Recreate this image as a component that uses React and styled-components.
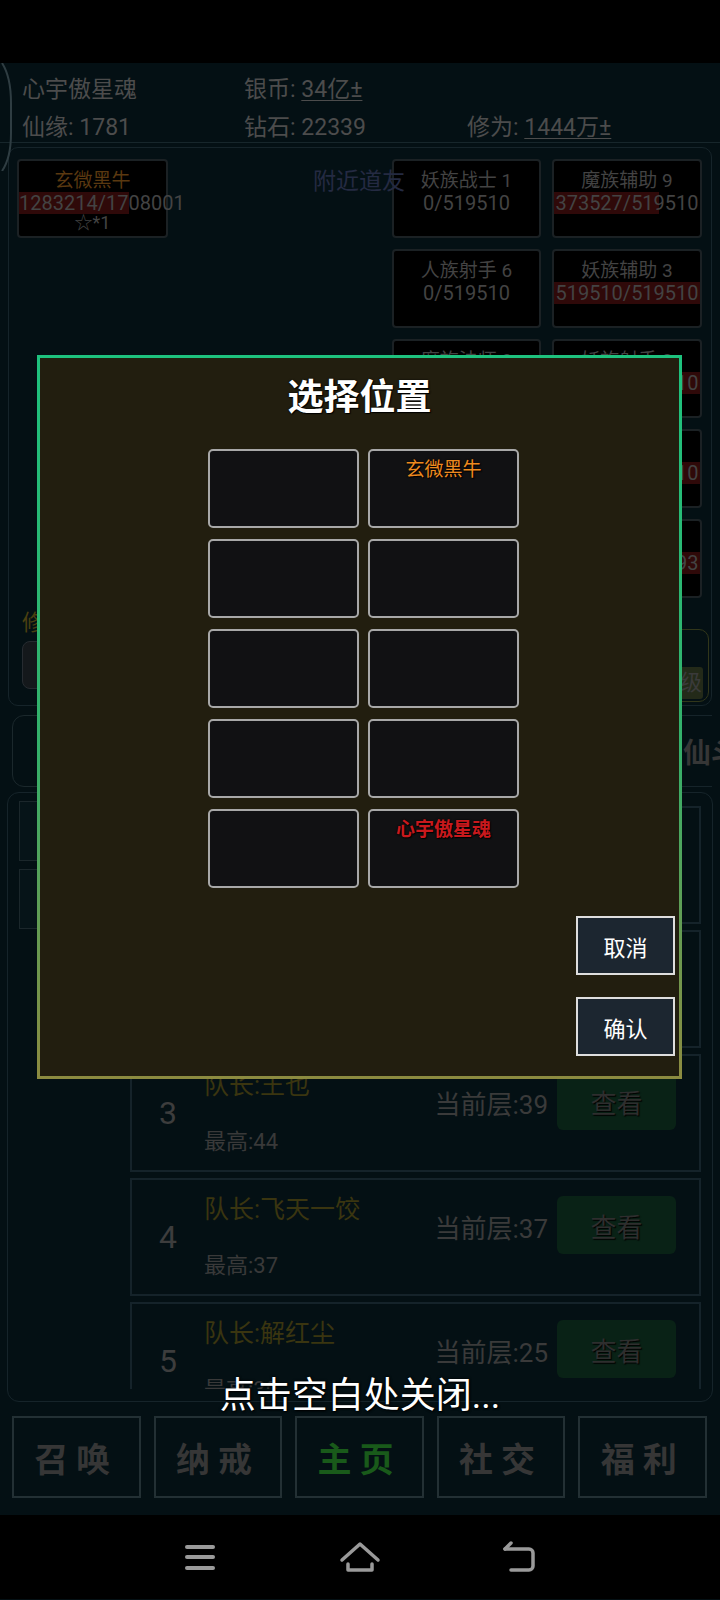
import React from 'react'
import styled, { createGlobalStyle } from 'styled-components'

const GlobalStyle = createGlobalStyle`
  html, body {
    margin: 0;
    padding: 0;
    background: #000;
  }
  body {
    font-family: "Roboto", "Noto Sans CJK SC", "Noto Sans", sans-serif;
  }
`

const Screen = styled.div`
  position: relative;
  width: 720px;
  height: 1600px;
  overflow: hidden;
  background: #041014;
  display: flex;
  flex-direction: column;
  color: #4d4d4d;
`

const StatusBar = styled.div`
  height: 63px;
  background: #000;
  flex-shrink: 0;
`

const Header = styled.div`
  position: relative;
  height: 80px;
  padding: 5px 0 0 22px;
  box-sizing: border-box;
  border-bottom: 1px solid #17262b;
  display: grid;
  grid-template-columns: 222px 223px 1fr;
  grid-template-rows: 38px 38px;
  align-items: center;
  font-size: 23px;
  color: #4c4c4c;
  flex-shrink: 0;
`

const Bracket = styled.svg`
  position: absolute;
  left: 0;
  top: 0;
`

const Stat = styled.div`
  white-space: nowrap;
`

const Under = styled.span`
  text-decoration: underline;
  text-underline-offset: 3px;
  text-decoration-thickness: 1px;
`

const Panel = styled.div`
  margin: 4px 8px 0;
  height: 559px;
  box-sizing: border-box;
  border: 1px solid #16242a;
  border-radius: 10px;
  padding: 11px 9px 3px 8px;
  display: flex;
  flex-direction: column;
  flex-shrink: 0;
`

const CardGrid = styled.div`
  display: grid;
  grid-template-columns: 151px minmax(0, 1fr) 149px 150px;
  grid-template-rows: repeat(5, 79px);
  column-gap: 11px;
  row-gap: 11px;
`

const Card = styled.div`
  background: #000;
  border: 2px solid #1b2124;
  border-radius: 4px;
  box-sizing: border-box;
  padding-top: 9px;
  display: flex;
  flex-direction: column;
  align-items: center;
  overflow: visible;
  grid-column: ${({ $col }) => $col};
  grid-row: ${({ $row }) => $row};
`

const CardTitle = styled.div`
  font-size: 19px;
  line-height: 22px;
  color: ${({ $tone }) => $tone || '#434343'};
  white-space: nowrap;
`

const CardValue = styled.div`
  align-self: stretch;
  text-align: center;
  font-size: 20px;
  line-height: 22px;
  color: #434343;
  white-space: nowrap;
  margin: 0 -6px;
  padding: 0 6px;
  background: ${({ $pct }) =>
    `linear-gradient(to right, transparent 6px, #2f0909 6px, #2f0909 calc(6px + ${$pct}% - ${$pct * 0.12}px), transparent calc(6px + ${$pct}% - ${$pct * 0.12}px))`};
`

const CardStar = styled.div`
  font-size: 18px;
  line-height: 18px;
  color: #434343;
`

const Nearby = styled.div`
  grid-column: 2;
  grid-row: 1;
  position: relative;
  z-index: 1;
  padding: 10px 0 0 134px;
  font-size: 23px;
  line-height: 26px;
  color: #242a42;
  white-space: nowrap;
`

const BottomSection = styled.div`
  margin-top: 12px;
  display: flex;
  justify-content: space-between;
  align-items: flex-start;
`

const LeftBlock = styled.div`
  margin-left: 5px;
  display: flex;
  flex-direction: column;
  gap: 5px;
`

const Label = styled.div`
  font-size: 22px;
  line-height: 26px;
  color: #4a3f10;
`

const InputBox = styled.div`
  width: 190px;
  height: 48px;
  border-radius: 8px;
  background: #14181b;
  border: 1px solid #262b30;
  box-sizing: border-box;
`

const UpgradeBox = styled.div`
  margin-top: 19px;
  margin-right: -7px;
  width: 150px;
  height: 73px;
  border: 1px solid #31361a;
  border-radius: 10px;
  box-sizing: border-box;
  display: flex;
  align-items: flex-end;
  justify-content: flex-end;
  padding: 0 5px 2px 0;
`

const UpgradeButton = styled.div`
  width: 110px;
  height: 32px;
  background: #232a19;
  border-radius: 3px;
  text-align: right;
  font-size: 22px;
  line-height: 32px;
  color: #3a3a3a;
  padding-right: 1px;
  box-sizing: border-box;
`

const TabRow = styled.div`
  margin: 9px 8px 0 12px;
  height: 72px;
  display: flex;
  flex-shrink: 0;
`

const TabBox = styled.div`
  width: 140px;
  border: 1px solid #1b282c;
  border-radius: 12px;
  box-sizing: border-box;
`

const TabRest = styled.div`
  flex: 1;
  border-top: 1px solid #16242a;
  border-bottom: 1px solid #16242a;
  display: flex;
  justify-content: flex-end;
  align-items: center;
`

const TabLabel = styled.div`
  margin-right: -27px;
  font-size: 28px;
  font-weight: bold;
  color: #363636;
  white-space: nowrap;
`

const ListPanel = styled.div`
  margin: 5px 7px 0;
  height: 610px;
  box-sizing: border-box;
  border: 1px solid #16242a;
  border-radius: 12px;
  padding-bottom: 12px;
  display: flex;
  flex-shrink: 0;
`

const SideTabs = styled.div`
  width: 100px;
  margin: 8px 11px 0 11px;
  display: flex;
  flex-direction: column;
  gap: 8px;
`

const SideTab = styled.div`
  height: 60px;
  border: 1px solid #1b272b;
  background: #061418;
  box-sizing: border-box;
`

const ListBody = styled.div`
  flex: 1;
  margin-right: 11px;
  padding-top: 13px;
  overflow: hidden;
  display: flex;
  flex-direction: column;
  gap: 6px;
`

const Item = styled.div`
  flex-shrink: 0;
  height: 118px;
  box-sizing: border-box;
  border: 2px solid #15232a;
  display: flex;
  align-items: flex-start;
`

const Rank = styled.div`
  width: 72px;
  align-self: center;
  text-align: center;
  font-size: 32px;
  color: #3d3d3d;
`

const Info = styled.div`
  flex: 1;
  align-self: stretch;
  padding: 16px 0 16px;
  display: flex;
  flex-direction: column;
  justify-content: space-between;
`

const Leader = styled.div`
  font-size: 25px;
  line-height: 28px;
  color: #3a3510;
`

const Best = styled.div`
  font-size: 22px;
  line-height: 24px;
  color: #393939;
`

const Floor = styled.div`
  margin-top: 34px;
  font-size: 26px;
  line-height: 30px;
  color: #3a3a3a;
`

const ViewButton = styled.div`
  margin: 16px 23px 0 9px;
  width: 119px;
  height: 58px;
  border-radius: 6px;
  background: #092216;
  display: flex;
  align-items: center;
  justify-content: center;
  font-size: 26px;
  color: #2e2e2e;
  text-shadow: 1px 1px 1px #000;
`

const NavBar = styled.div`
  margin-top: 14px;
  height: 82px;
  padding: 0 13px 0 12px;
  display: grid;
  grid-template-columns: repeat(5, 1fr);
  column-gap: 13px;
  flex-shrink: 0;
`

const NavButton = styled.div`
  border: 2px solid #233034;
  display: flex;
  align-items: center;
  justify-content: center;
  font-size: 34px;
  font-weight: bold;
  letter-spacing: 8px;
  color: ${({ $active }) => ($active ? '#195a1a' : '#363636')};
`

const SystemBar = styled.div`
  margin-top: 17px;
  height: 84px;
  background: #000;
  display: grid;
  grid-template-columns: repeat(3, 160px);
  justify-content: center;
  align-items: center;
  justify-items: center;
  flex-shrink: 0;
`

const Modal = styled.div`
  position: absolute;
  top: 355px;
  left: 37px;
  width: 645px;
  height: 724px;
  box-sizing: border-box;
  border: 3px solid;
  border-image: linear-gradient(180deg, #1ec27e 0%, #35b06a 55%, #8c8b40 100%) 1;
  background: #221e0f;
  display: flex;
  flex-direction: column;
  align-items: center;
`

const ModalTitle = styled.div`
  margin-top: 20px;
  font-size: 36px;
  line-height: 40px;
  font-weight: bold;
  color: #fff;
  text-shadow: 0 0 2px #000, 1px 1px 1px #000;
`

const SlotGrid = styled.div`
  margin-top: 31px;
  margin-left: 8px;
  display: grid;
  grid-template-columns: repeat(2, 151px);
  grid-auto-rows: 79px;
  column-gap: 9px;
  row-gap: 11px;
`

const Slot = styled.div`
  background: #111113;
  border: 2px solid #a8a8a8;
  border-radius: 5px;
  box-sizing: border-box;
  text-align: center;
  padding-top: 7px;
  font-size: 19px;
  line-height: 24px;
  font-weight: ${({ $bold }) => ($bold ? 'bold' : 'normal')};
  color: ${({ $color }) => $color || '#fff'};
  text-shadow: 1px 1px 1px #000, 0 0 2px #000;
`

const Actions = styled.div`
  align-self: flex-end;
  margin: 28px 4px 0 0;
  display: flex;
  flex-direction: column;
  gap: 22px;
`

const ActionButton = styled.div`
  width: 99px;
  height: 59px;
  box-sizing: border-box;
  border: 2px solid #dedede;
  background: #1c2630;
  display: flex;
  align-items: center;
  justify-content: center;
  font-size: 22px;
  color: #fff;
`

const CloseHint = styled.div`
  position: absolute;
  top: 1374px;
  left: 0;
  right: 0;
  text-align: center;
  font-size: 36px;
  line-height: 44px;
  color: #fff;
  text-shadow: 0 0 3px #000, 1px 1px 2px #000;
`

const rightCards = [
  ['妖族战士 1', 0, 519510],
  ['魔族辅助 9', 373527, 519510],
  ['人族射手 6', 0, 519510],
  ['妖族辅助 3', 519510, 519510],
  ['魔族法师 8', 0, 519510],
  ['妖族射手 2', 519510, 519510],
  ['人族战士 4', 0, 519510],
  ['魔族战士 5', 519510, 519510],
  ['人族辅助 7', 0, 519510],
  ['妖族法师 1', 412793, 412793],
]

const teams = [
  { rank: 1, leader: '队长:青云子', best: 61, floor: 58 },
  { rank: 2, leader: '队长:落雪', best: 50, floor: 47 },
  { rank: 3, leader: '队长:王也', best: 44, floor: 39 },
  { rank: 4, leader: '队长:飞天一饺', best: 37, floor: 37 },
  { rank: 5, leader: '队长:解红尘', best: 30, floor: 25 },
]

const slots = [
  null,
  { name: '玄微黑牛', color: '#ee8a1f' },
  null,
  null,
  null,
  null,
  null,
  null,
  null,
  { name: '心宇傲星魂', color: '#c8191d', bold: true },
]

const MenuIcon = () => (
  <svg width="32" height="28" viewBox="0 0 32 28">
    <g stroke="#9a9a9a" strokeWidth="4" strokeLinecap="round">
      <line x1="3" y1="4" x2="29" y2="4" />
      <line x1="3" y1="14" x2="29" y2="14" />
      <line x1="3" y1="25" x2="29" y2="25" />
    </g>
  </svg>
)

const HomeIcon = () => (
  <svg width="42" height="32" viewBox="0 0 42 32">
    <g stroke="#9a9a9a" strokeWidth="3.5" fill="none" strokeLinecap="round" strokeLinejoin="round">
      <path d="M3 19 L21 3 L39 19" />
      <path d="M9 23 V29 H33 V23" />
    </g>
  </svg>
)

const BackIcon = () => (
  <svg width="36" height="32" viewBox="0 0 36 32">
    <g stroke="#9a9a9a" strokeWidth="3.5" fill="none" strokeLinecap="round" strokeLinejoin="round">
      <path d="M3 8 L9 2" />
      <path d="M3 8 H27 a4 4 0 0 1 4 4 V25 a4 4 0 0 1 -4 4 H9" />
    </g>
  </svg>
)

const App = () => {
  return (
    <>
      <GlobalStyle />
      <Screen>
        <StatusBar />
        <Header>
          <Bracket width="14" height="108" viewBox="0 0 14 108">
            <path d="M2 0 Q11 14 11 40 L11 70 Q11 95 2 108" stroke="#2f3d42" strokeWidth="2" fill="none" />
          </Bracket>
          <Stat>心宇傲星魂</Stat>
          <Stat>
            银币: <Under>34亿±</Under>
          </Stat>
          <Stat />
          <Stat>仙缘: 1781</Stat>
          <Stat>钻石: 22339</Stat>
          <Stat>
            修为: <Under>1444万±</Under>
          </Stat>
        </Header>

        <Panel>
          <CardGrid>
            <Card $col={1} $row={1}>
              <CardTitle $tone="#5a3810">玄微黑牛</CardTitle>
              <CardValue $pct={(1283214 / 1708001) * 100}>1283214/1708001</CardValue>
              <CardStar>☆*1</CardStar>
            </Card>
            <Nearby>附近道友</Nearby>
            {rightCards.map(([name, cur, max], i) => (
              <Card key={name + i} $col={3 + (i % 2)} $row={1 + Math.floor(i / 2)}>
                <CardTitle>{name}</CardTitle>
                <CardValue $pct={(cur / max) * 100}>
                  {cur}/{max}
                </CardValue>
              </Card>
            ))}
          </CardGrid>
          <BottomSection>
            <LeftBlock>
              <Label>修炼目标</Label>
              <InputBox />
            </LeftBlock>
            <UpgradeBox>
              <UpgradeButton>一键升级</UpgradeButton>
            </UpgradeBox>
          </BottomSection>
        </Panel>

        <TabRow>
          <TabBox />
          <TabRest>
            <TabLabel>仙斗</TabLabel>
          </TabRest>
        </TabRow>

        <ListPanel>
          <SideTabs>
            <SideTab />
            <SideTab />
          </SideTabs>
          <ListBody>
            {teams.map((t) => (
              <Item key={t.rank}>
                <Rank>{t.rank}</Rank>
                <Info>
                  <Leader>{t.leader}</Leader>
                  <Best>最高:{t.best}</Best>
                </Info>
                <Floor>当前层:{t.floor}</Floor>
                <ViewButton>查看</ViewButton>
              </Item>
            ))}
          </ListBody>
        </ListPanel>

        <NavBar>
          <NavButton>召唤</NavButton>
          <NavButton>纳戒</NavButton>
          <NavButton $active>主页</NavButton>
          <NavButton>社交</NavButton>
          <NavButton>福利</NavButton>
        </NavBar>

        <SystemBar>
          <MenuIcon />
          <HomeIcon />
          <BackIcon />
        </SystemBar>

        <Modal>
          <ModalTitle>选择位置</ModalTitle>
          <SlotGrid>
            {slots.map((s, i) => (
              <Slot key={i} $color={s && s.color} $bold={s && s.bold}>
                {s ? s.name : ''}
              </Slot>
            ))}
          </SlotGrid>
          <Actions>
            <ActionButton>取消</ActionButton>
            <ActionButton>确认</ActionButton>
          </Actions>
        </Modal>

        <CloseHint>点击空白处关闭...</CloseHint>
      </Screen>
    </>
  )
}

export default App
